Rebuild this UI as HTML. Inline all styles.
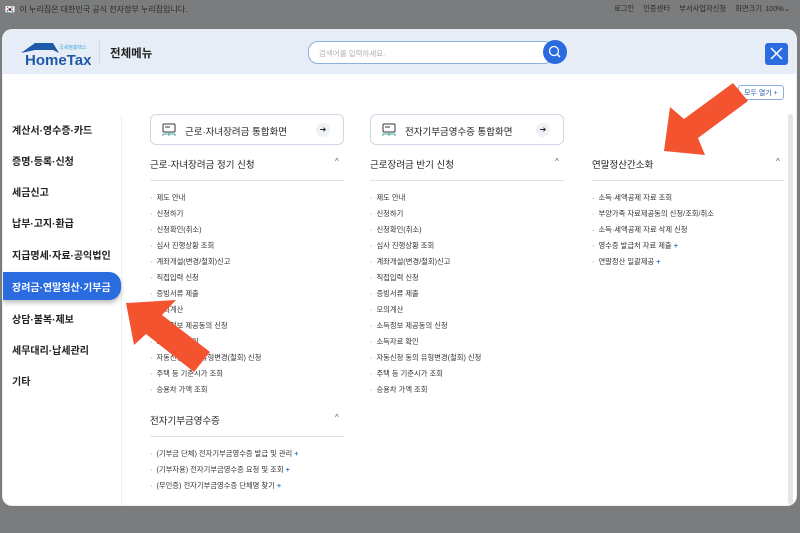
<!DOCTYPE html>
<html><head><meta charset="utf-8">
<style>
*{margin:0;padding:0;box-sizing:border-box}
body{width:800px;height:533px;background:#7b7c7d;font-family:"Liberation Sans","Noto Sans CJK KR",sans-serif;position:relative;overflow:hidden;color:#222}
.top{position:absolute;top:0;left:0;right:0;height:20px;font-size:8px;color:#2a2a2a}
.modal{position:absolute;left:2px;top:29px;width:795px;height:477px;background:#fff;border-radius:10px;overflow:hidden;border:1px dotted #ddd}
.hdr{position:absolute;left:0;top:0;right:0;height:44px;background:#e7edf7}
.abs{position:absolute;white-space:nowrap}
.lm{position:absolute;left:9px;font-size:10px;font-weight:bold;color:#222}
.btn{position:absolute;height:31px;width:194px;border:1px solid #cfd8e6;border-radius:6px;background:#fff;font-size:9.5px}
.h{position:absolute;font-size:9.5px;color:#222}
.ln{position:absolute;height:1px;background:#dde2ea}
.it{position:absolute;font-size:7.3px;color:#333;white-space:nowrap}
.it:before{content:"·";margin-right:4px;color:#666}
.p{color:#2a6be0;font-weight:bold}
.car{position:absolute;font-size:8px;color:#555}
</style></head><body>
<div class="top">
<div class="abs" style="left:5px;top:4px">🇰🇷&nbsp; 이 누리집은 대한민국 공식 전자정부 누리집입니다.</div>
<div class="abs" style="left:614px;top:4px;font-size:7.3px;word-spacing:1px">로그인 &nbsp; 인증센터 &nbsp; 부서사업자신청 &nbsp; 화면크기 100%⌄</div>
</div>
<div class="modal">
<div class="hdr">
<svg class="abs" style="left:16px;top:11px" width="72" height="26" viewBox="0 0 72 26"><path d="M2 12 L16 2 L34 2 L40 12 L34 9 L16 9 Z" fill="#1e5aa8"/><text x="6" y="24" font-family="Liberation Sans" font-weight="bold" font-size="15" fill="#1e5aa8">HomeTax</text><text x="40" y="8" font-size="5" fill="#3aa7d8" font-family="Noto Sans CJK KR">국세청홈택스</text></svg>
<div class="abs" style="left:96px;top:10px;width:1px;height:24px;background:#d4dbe6"></div>
<div class="abs" style="left:107px;top:15px;font-size:11.5px;font-weight:bold">전체메뉴</div>
<div class="abs" style="left:305px;top:11px;width:246px;height:23px;border:1px solid #8eaee0;border-radius:10px;background:#fff;font-size:7.5px;color:#b0b0b0;padding:6px 0 0 10px">검색어를 입력하세요.</div>
<div class="abs" style="left:540px;top:10px;width:24px;height:24px;border-radius:50%;background:#2a6be0"><svg width="24" height="24"><circle cx="11" cy="11" r="4.5" fill="none" stroke="#fff" stroke-width="1.3"/><path d="M14 14 L17 17" stroke="#fff" stroke-width="1.5"/></svg></div>
<div class="abs" style="left:762px;top:13px;width:23px;height:22px;border-radius:3px;background:#2a6be0"><svg width="23" height="22"><path d="M6 5 L17 16 M17 5 L6 16" stroke="#fff" stroke-width="1.5"/></svg></div>
</div>
<div class="abs" style="left:735px;top:55px;width:46px;height:15px;border:1px solid #8eaee0;border-radius:3px;font-size:7px;color:#2a5ca8;padding:2px 0 0 5px">모두 열기 +</div>
<div class="abs" style="left:118px;top:85px;width:1px;height:390px;background:#eef0f3"></div>
<div class="lm" style="top:92px">계산서·영수증·카드</div>
<div class="lm" style="top:123px">증명·등록·신청</div>
<div class="lm" style="top:154px">세금신고</div>
<div class="lm" style="top:185px">납부·고지·환급</div>
<div class="lm" style="top:217px">지급명세·자료·공익법인</div>
<div class="abs" style="left:0;top:242px;width:118px;height:28px;background:#2a6be0;border-radius:0 12px 12px 0;box-shadow:0 3px 5px rgba(0,0,0,.25)"></div>
<div class="lm" style="top:249px;color:#fff">장려금·연말정산·기부금</div>
<div class="lm" style="top:281px">상담·불복·제보</div>
<div class="lm" style="top:312px">세무대리·납세관리</div>
<div class="lm" style="top:343px">기타</div>

<div class="btn" style="left:147px;top:84px"><svg class="abs" style="left:10px;top:8px" width="16" height="15"><rect x="2" y="1" width="12" height="8" rx="1" fill="none" stroke="#333" stroke-width="1"/><path d="M4 4h5" stroke="#333"/><path d="M8 9v2 M2 11h12 M2 11v2 M8 11v2 M14 11v2" stroke="#4aa89a"/></svg><span class="abs" style="left:34px;top:9px">근로·자녀장려금 통합화면</span><span class="abs" style="left:165px;top:8px;width:14px;height:14px;border-radius:50%;background:#eef1f5;font-size:8px;text-align:center;line-height:14px">➔</span></div>
<div class="btn" style="left:367px;top:84px"><svg class="abs" style="left:10px;top:8px" width="16" height="15"><rect x="2" y="1" width="12" height="8" rx="1" fill="none" stroke="#333" stroke-width="1"/><path d="M4 4h5" stroke="#333"/><path d="M8 9v2 M2 11h12 M2 11v2 M8 11v2 M14 11v2" stroke="#4aa89a"/></svg><span class="abs" style="left:34px;top:9px">전자기부금영수증 통합화면</span><span class="abs" style="left:165px;top:8px;width:14px;height:14px;border-radius:50%;background:#eef1f5;font-size:8px;text-align:center;line-height:14px">➔</span></div>

<div class="h" style="left:147px;top:127px">근로·자녀장려금 정기 신청</div><div class="car" style="left:332px;top:127px">^</div>
<div class="ln" style="left:147px;top:150px;width:194px"></div>
<div class="h" style="left:367px;top:127px">근로장려금 반기 신청</div><div class="car" style="left:552px;top:127px">^</div>
<div class="ln" style="left:367px;top:150px;width:194px"></div>
<div class="h" style="left:589px;top:127px">연말정산간소화</div><div class="car" style="left:773px;top:127px">^</div>
<div class="ln" style="left:589px;top:150px;width:192px"></div>

<div class="it" style="left:147px;top:163px">제도 안내</div>
<div class="it" style="left:147px;top:179px">신청하기</div>
<div class="it" style="left:147px;top:195px">신청확인(취소)</div>
<div class="it" style="left:147px;top:211px">심사 진행상황 조회</div>
<div class="it" style="left:147px;top:227px">계좌개설(변경/철회)신고</div>
<div class="it" style="left:147px;top:243px">직접입력 신청</div>
<div class="it" style="left:147px;top:259px">증빙서류 제출</div>
<div class="it" style="left:147px;top:275px">모의계산</div>
<div class="it" style="left:147px;top:291px">소득정보 제공동의 신청</div>
<div class="it" style="left:147px;top:307px">소득자료 확인</div>
<div class="it" style="left:147px;top:323px">자동신청 동의 유형변경(철회) 신청</div>
<div class="it" style="left:147px;top:339px">주택 등 기준시가 조회</div>
<div class="it" style="left:147px;top:355px">승용차 가액 조회</div>

<div class="it" style="left:367px;top:163px">제도 안내</div>
<div class="it" style="left:367px;top:179px">신청하기</div>
<div class="it" style="left:367px;top:195px">신청확인(취소)</div>
<div class="it" style="left:367px;top:211px">심사 진행상황 조회</div>
<div class="it" style="left:367px;top:227px">계좌개설(변경/철회)신고</div>
<div class="it" style="left:367px;top:243px">직접입력 신청</div>
<div class="it" style="left:367px;top:259px">증빙서류 제출</div>
<div class="it" style="left:367px;top:275px">모의계산</div>
<div class="it" style="left:367px;top:291px">소득정보 제공동의 신청</div>
<div class="it" style="left:367px;top:307px">소득자료 확인</div>
<div class="it" style="left:367px;top:323px">자동신청 동의 유형변경(철회) 신청</div>
<div class="it" style="left:367px;top:339px">주택 등 기준시가 조회</div>
<div class="it" style="left:367px;top:355px">승용차 가액 조회</div>

<div class="it" style="left:589px;top:163px">소득·세액공제 자료 조회</div>
<div class="it" style="left:589px;top:179px">부양가족 자료제공동의 신청/조회/취소</div>
<div class="it" style="left:589px;top:195px">소득·세액공제 자료 삭제 신청</div>
<div class="it" style="left:589px;top:211px">영수증 발급처 자료 제출 <span class="p">+</span></div>
<div class="it" style="left:589px;top:227px">연말정산 일괄제공 <span class="p">+</span></div>

<div class="h" style="left:147px;top:383px">전자기부금영수증</div><div class="car" style="left:332px;top:383px">^</div>
<div class="ln" style="left:147px;top:406px;width:194px"></div>
<div class="it" style="left:147px;top:419px">(기부금 단체) 전자기부금영수증 발급 및 관리 <span class="p">+</span></div>
<div class="it" style="left:147px;top:435px">(기부자용) 전자기부금영수증 요청 및 조회 <span class="p">+</span></div>
<div class="it" style="left:147px;top:451px">(무인증) 전자기부금영수증 단체명 찾기 <span class="p">+</span></div>
<div class="abs" style="left:785px;top:84px;width:5px;height:390px;background:#e6e6e6;border-radius:3px"></div>
</div>
<svg class="abs" style="left:0;top:0" width="800" height="533">
<polygon points="126,303 176,300 162,315 210,352 194,372 146,334 134,345" fill="#f4532f"/>
<polygon points="664,151 670,107 684,119 733,83 748,101 698,138 705,155" fill="#f4532f"/>
</svg>
</body></html>
